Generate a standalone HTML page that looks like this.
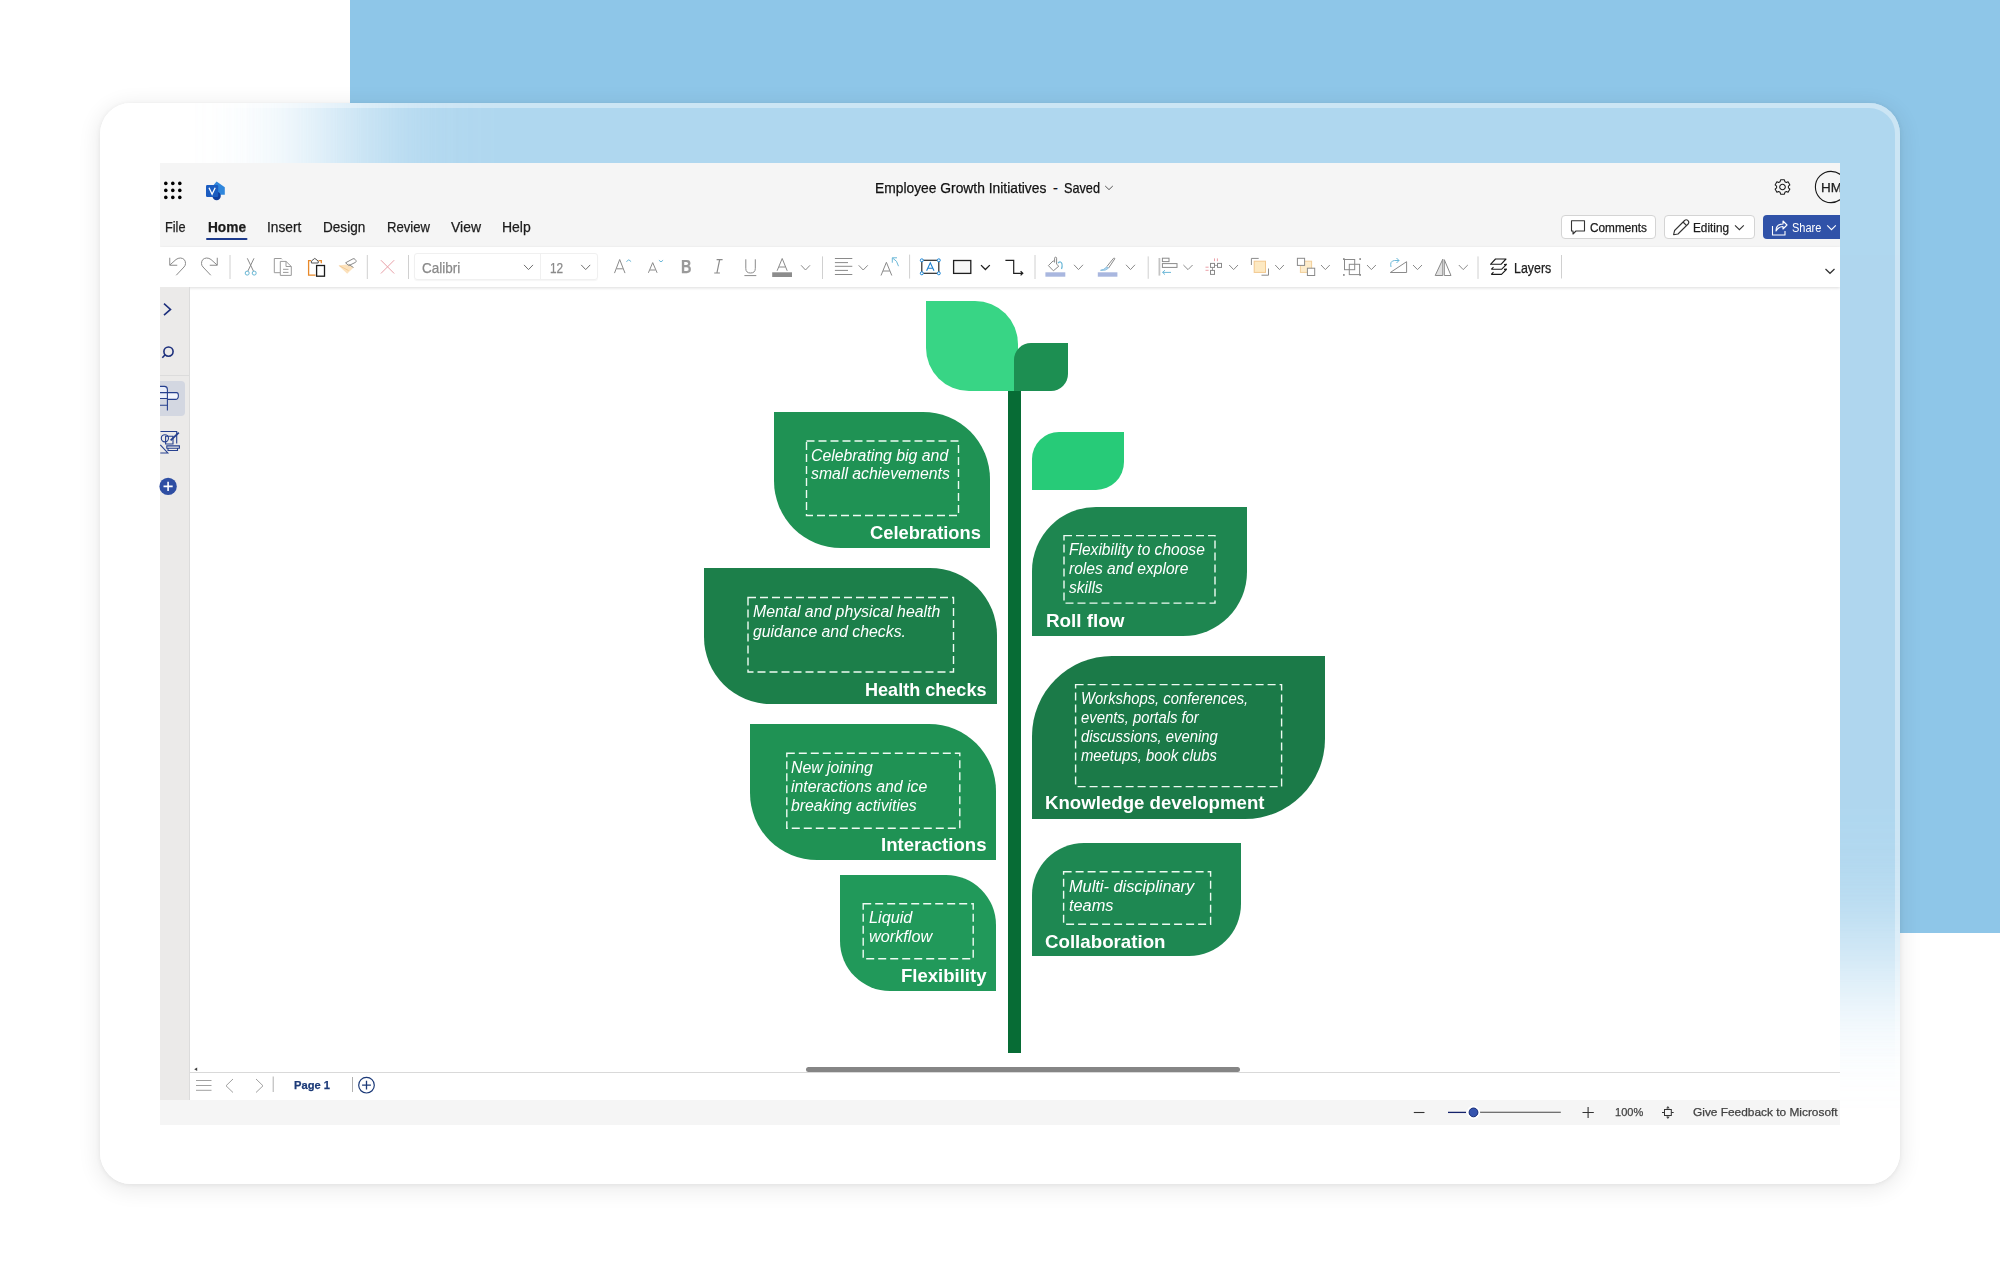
<!DOCTYPE html>
<html><head><meta charset="utf-8">
<style>
*{box-sizing:border-box;margin:0;padding:0}
html,body{width:2000px;height:1283px;overflow:hidden;background:#fff}
body{position:relative;font-family:"Liberation Sans",sans-serif;color:#242424}
.a{position:absolute}
.tx{position:absolute;white-space:pre;line-height:1;transform-origin:0 50%}
.ui{-webkit-text-stroke:.25px currentColor}
#bluebg{left:350px;top:0;width:1650px;height:933px;background:#8ec6e8}
#cardsh{left:100px;top:103px;width:1800px;height:1081px;border-radius:31px;box-shadow:0 1px 5px rgba(0,0,0,.07),0 4px 20px 4px rgba(0,0,0,.07)}
#card{left:100px;top:103px;width:1800px;height:1081px;border-radius:31px;overflow:hidden;background:#fff}
#frost{left:238px;top:-400px;width:1900px;height:1262px;background:#8ec6e8;filter:blur(65px);opacity:.7}
#cardbord{left:0;top:0;width:1800px;height:1081px;border-radius:31px;border:5px solid rgba(255,255,255,.35)}
#app{left:160px;top:163px;width:1680px;height:962px;overflow:hidden;background:#fff}
#titlebar{left:0;top:0;width:1680px;height:84px;background:#f5f5f5}
#toolbar{left:0;top:84px;width:1680px;height:40px;background:#fff;box-shadow:0 1px 3px rgba(0,0,0,.14)}
#sidebar{left:0;top:124px;width:30px;height:813px;background:#ebeae9;border-right:1px solid #dcdcdc}
#bottombar{left:30px;top:909px;width:1650px;height:28px;background:#fff;border-top:1px solid #d9d9d9}
#status{left:0;top:937px;width:1680px;height:25px;background:#f5f5f5}
.leaf{position:absolute}
.btn{position:absolute;background:#fff;border:1px solid #d4d4d4;border-radius:4px}
</style></head><body>
<div id="bluebg" class="a"></div>
<div id="cardsh" class="a"></div>
<div id="card" class="a">
  <div id="frost" class="a"></div>
  <div id="cardbord" class="a"></div>
</div>
<div id="app" class="a">
  <div id="titlebar" class="a"></div>
  <div id="toolbar" class="a"></div>
  <div id="sidebar" class="a"></div>
  <div id="bottombar" class="a"></div>
  <div id="status" class="a"></div>
  <!-- buttons (app coords) -->
  <div class="btn" style="left:1401px;top:52px;width:95px;height:24px"></div>
  <div class="btn" style="left:1504px;top:52px;width:91px;height:24px"></div>
  <div class="a" style="left:1603px;top:52px;width:100px;height:24px;background:#3052a8;border-radius:4px"></div>
  <div class="a" style="left:254px;top:90px;width:184px;height:27px;border:1px solid #f0f0f0;border-radius:3px;box-shadow:0 1px 1px rgba(0,0,0,.04)"></div>
  <div class="a" style="left:380px;top:91px;width:1px;height:25px;background:#f0f0f0"></div>
  <div class="a" style="left:0;top:218px;width:25px;height:35px;background:#d3d7e1;border-radius:0 4px 4px 0"></div>
  <div class="a" style="left:0;top:212px;width:30px;height:1px;background:#dcdcdc"></div>
  <div class="a" style="left:645.5px;top:903.5px;width:434.5px;height:5px;background:#858585;border-radius:3px"></div>
</div>

<!-- diagram (page coords) -->
<div class="a" style="left:1008px;top:391px;width:13px;height:662px;background:#076c35"></div>
<div class="leaf" style="left:926px;top:301px;width:92px;height:90px;background:#38d585;border-radius:0 43px 0 43px"></div>
<div class="leaf" style="left:1014px;top:343px;width:54px;height:48px;background:#1d8f52;border-radius:17px 0 17px 0"></div>
<div class="leaf" style="left:1032px;top:432px;width:92px;height:58px;background:#27cb78;border-radius:27px 0 28px 0"></div>

<div class="leaf" style="left:774px;top:412px;width:216px;height:136px;background:#1f9254;border-radius:0 67px 0 67px"></div>
<div class="leaf" style="left:704px;top:568px;width:293px;height:136px;background:#1c7f4a;border-radius:0 67px 0 67px"></div>
<div class="leaf" style="left:750px;top:724px;width:246px;height:136px;background:#1f9254;border-radius:0 67px 0 67px"></div>
<div class="leaf" style="left:840px;top:875px;width:156px;height:116px;background:#21995a;border-radius:0 50px 0 50px"></div>

<div class="leaf" style="left:1032px;top:507px;width:215px;height:129px;background:#1e8650;border-radius:64px 0 64px 0"></div>
<div class="leaf" style="left:1032px;top:656px;width:293px;height:163px;background:#1b7a48;border-radius:80px 0 80px 0"></div>
<div class="leaf" style="left:1032px;top:843px;width:209px;height:113px;background:#1e8852;border-radius:52px 0 52px 0"></div>

<div class="a" style="left:0;top:0;width:1840px;height:1283px;overflow:hidden">
<svg class="a" style="left:0;top:0" width="1840" height="1283" viewBox="0 0 1840 1283">
<!-- dashed boxes -->
<g fill="none" stroke="#eefbf2" stroke-width="1.4" stroke-dasharray="8 4">
<rect x="806.5" y="441" width="152" height="74.5"/>
<rect x="748" y="597.5" width="205.5" height="74.5"/>
<rect x="786.8" y="753.2" width="173" height="75"/>
<rect x="863.2" y="903.8" width="110" height="55"/>
<rect x="1064" y="535.6" width="151" height="67.5"/>
<rect x="1075.6" y="684.6" width="206" height="102"/>
<rect x="1063.6" y="871.8" width="147" height="52.5"/>
</g>
<!-- launcher dots -->
<g fill="#000">
<circle cx="165.8" cy="183.4" r="1.8"/><circle cx="172.8" cy="183.4" r="1.8"/><circle cx="179.8" cy="183.4" r="1.8"/>
<circle cx="165.8" cy="190.4" r="1.8"/><circle cx="172.8" cy="190.4" r="1.8"/><circle cx="179.8" cy="190.4" r="1.8"/>
<circle cx="165.8" cy="197.4" r="1.8"/><circle cx="172.8" cy="197.4" r="1.8"/><circle cx="179.8" cy="197.4" r="1.8"/>
</g>
<!-- visio logo -->
<path d="M212,187 L216.6,181.6 L224.8,187.2 L224.8,194.8 L212,194.8Z" fill="#2f86dc"/>
<circle cx="216.6" cy="196" r="4.2" fill="#0f3d9c"/>
<rect x="206" y="185" width="12.2" height="12" rx="1.2" fill="#1b5cc0"/>
<path d="M209,187.8 L212.1,194.3 L215.2,187.8" fill="none" stroke="#fff" stroke-width="1.3"/>
<!-- title chevron -->
<path d="M1105.2,186 L1109,189.6 L1112.8,186" fill="none" stroke="#555" stroke-width="1"/>
<!-- Home underline -->
<rect x="206" y="238" width="41.5" height="2" rx="1" fill="#1c3a8c"/>
<!-- gear -->
<g transform="translate(1782.5,187)" fill="none" stroke="#1a1a1a" stroke-width="1.05">
<path d="M-1.9,-7.2 L1.9,-7.2 L2.4,-5.3 L3.9,-4.5 L5.6,-5.3 L7.4,-2.1 L5.9,-0.9 L5.9,0.9 L7.4,2.1 L5.6,5.3 L3.9,4.5 L2.4,5.3 L1.9,7.2 L-1.9,7.2 L-2.4,5.3 L-3.9,4.5 L-5.6,5.3 L-7.4,2.1 L-5.9,0.9 L-5.9,-0.9 L-7.4,-2.1 L-5.6,-5.3 L-3.9,-4.5 L-2.4,-5.3Z" stroke-linejoin="round"/>
<circle r="2.8"/>
</g>
<!-- avatar -->
<circle cx="1831" cy="187" r="15.6" fill="none" stroke="#1a1a1a" stroke-width="1.1"/>
<!-- comments icon -->
<path d="M1571.5,220.7 H1584.5 V231 H1576 L1573,234 V231 H1571.5Z" fill="none" stroke="#333" stroke-width="1.1" stroke-linejoin="round"/>
<!-- pencil -->
<g fill="none" stroke="#333" stroke-width="1.1" stroke-linejoin="round">
<path d="M1673.6,234.7 L1674.6,230.5 L1684.6,220.5 Q1686.3,219 1688,220.7 Q1689.6,222.4 1688.1,224 L1678,234 Z"/>
<path d="M1683,222 L1686.6,225.6"/>
</g>
<path d="M1735,225.3 L1739.4,229.7 L1743.8,225.3" fill="none" stroke="#333" stroke-width="1.1"/>
<!-- share icon -->
<g fill="none" stroke="#fff" stroke-width="1.1" stroke-linejoin="round">
<path d="M1772.5,226 V235 H1785 V231"/>
<path d="M1776,231 Q1776,224 1783,224 V221 L1787,225 L1783,229 V226.5 Q1778.5,226.5 1776,231Z"/>
</g>
<path d="M1827.2,225.3 L1831.5,229.7 L1835.8,225.3" fill="none" stroke="#fff" stroke-width="1.1"/>

<!-- ===== toolbar ===== -->
<g fill="none" stroke-width="1">
<!-- undo/redo -->
<path d="M169.75,257.75 V265.25 H177.25 M169.9,265 L176,259.5 Q178,258 180.5,258 Q185.5,258.5 185.5,263.5 Q185.5,265.5 184,267 L176.25,275.25" stroke="#8a8a8a"/>
<path d="M217.25,257.75 V265.25 H209.75 M217.1,265 L211,259.5 Q209,258 206.5,258 Q201.5,258.5 201.5,263.5 Q201.5,265.5 203,267 L210.75,275.25" stroke="#8a8a8a"/>
<!-- separators -->
<path d="M230,255 V279 M367.3,255 V279 M408.5,255 V279 M822.5,256.4 V279 M909.6,254.6 V278.6 M1035,255 V279 M1148.2,256.4 V278.8 M1478,256.4 V278.9 M1561.5,255 V278.5" stroke="#d0d0d0"/>
<!-- scissors -->
<path d="M247.3,258.3 L253.5,271.2 M254,258.3 L247.8,271.2" stroke="#8a8a8a"/>
<circle cx="247.2" cy="273.1" r="2" stroke="#66b6d4"/>
<circle cx="254.2" cy="273.1" r="2" stroke="#66b6d4"/>
<!-- copy -->
<path d="M280,272.7 H274.3 V258.5 H281.3 L282,259.3" stroke="#9a9a9a"/>
<path d="M280.3,261.4 H286 L291.3,266.5 V275.4 H280.3Z M286,261.4 V266.5 H291.3 M283,269.3 H288.5 M283,272.4 H288.5" stroke="#9a9a9a"/>
<!-- paste -->
<path d="M315.5,275.2 H308.6 V260.6 H311 M318.5,260.6 H321.3 V263.3" stroke="#e8892a" stroke-width="1.3"/>
<path d="M311.4,263 H318.2 V261 L314.8,258.4 L311.4,261Z" stroke="#555"/>
<rect x="316.6" y="265.5" width="7.9" height="10.7" stroke="#1a1a1a" stroke-width="1.3" fill="#fff"/>
<!-- format painter -->
<path d="M338.5,265.4 L347.2,273.8 L353.5,267.5 L348.6,264.2Z" fill="#fce2bd" stroke="none"/>
<path d="M339.5,265.8 L348.5,270.5" stroke="#f3c78e" stroke-width=".9"/>
<path d="M345.6,262.8 L353,258.8 Q354.2,258.3 355,259.3 L356,260.6 Q356.5,261.6 355.6,262.3 L348.8,265.6 Z M348.6,264.3 L353.5,267.5" stroke="#8a8a8a"/>
<!-- delete X -->
<path d="M380.9,260.2 L394.2,273.5 M394.2,260.2 L380.9,273.5" stroke="#e9a0a8"/>
<!-- font dropdown chevrons -->
<path d="M524,264.9 L528.5,269.6 L533,264.9 M581.2,264.9 L585.7,269.6 L590.2,264.9" stroke="#707070"/>
<!-- A grow -->
<path d="M614.5,273.1 L619.7,259.5 L625,273.1 M616.5,268.8 H622.9" stroke="#8a8a8a"/>
<path d="M626.4,261.6 L628.8,259.8 L631.1,261.6" stroke="#6cb8d8"/>
<!-- A shrink -->
<path d="M648.4,272.8 L652.7,262.6 L657.1,272.8 M650,270 H655.5" stroke="#8a8a8a"/>
<path d="M658.9,260.2 L661,261.9 L663.1,260.2" stroke="#6cb8d8"/>
<!-- I -->
<path d="M716.6,259.7 H722.6 M719.7,259.7 L716.9,273 M714.2,273 H719.9" stroke="#8a8a8a" stroke-width="1.2"/>
<!-- U -->
<path d="M745.8,259.3 V268.5 Q745.8,273 750.5,273 Q755.3,273 755.3,268.5 V259.3 M744.4,275.6 H756.3" stroke="#8a8a8a"/>
<!-- A font color -->
<path d="M777.1,270.8 L782.2,258.5 L787.2,270.8 M779,267 H785.4" stroke="#8a8a8a"/>
<rect x="772.2" y="272.3" width="19.8" height="4.7" fill="#8c8c8c" stroke="none"/>
<path d="M801.1,265.3 L805.5,270 L810,265.3" stroke="#8a8a8a"/>
<!-- align -->
<path d="M834.9,258.5 H852.3 M834.9,262.6 H848 M834.9,266.3 H852.3 M834.9,270.4 H848 M834.9,274.5 H852.3" stroke="#8a8a8a"/>
<path d="M858.7,265.3 L863.2,270 L867.8,265.3" stroke="#8a8a8a"/>
<!-- A with arrow -->
<path d="M881,275.5 L886.4,262.3 L891.8,275.5 M883,271 H889.8" stroke="#8a8a8a"/>
<path d="M892.3,262.7 V257.8 H897 M892.5,258 Q897.5,260.5 898.5,266.2" stroke="#6cb8d8"/>
<!-- text box -->
<rect x="921.8" y="260.3" width="17" height="13" stroke="#2a2a2a" stroke-width="1.2"/>
<g fill="#fff" stroke="#1e88d8" stroke-width="1"><circle cx="921.8" cy="260.3" r="1.5"/><circle cx="938.8" cy="260.3" r="1.5"/><circle cx="921.8" cy="273.3" r="1.5"/><circle cx="938.8" cy="273.3" r="1.5"/></g>
<path d="M926.6,270.8 L930.3,262.7 L934,270.8 M927.8,268.2 H932.8" stroke="#1e80d0" stroke-width="1.1"/>
<!-- rectangle -->
<rect x="953.6" y="260.5" width="17.2" height="12.9" fill="#f6f6f6" stroke="#1f1f1f" stroke-width="1.3"/>
<path d="M981,265.1 L985.4,269.5 L989.8,265.1" stroke="#1f1f1f" stroke-width="1.3"/>
<!-- connector -->
<path d="M1005.4,260.3 H1013.7 V273.3 H1022.3 M1020.6,271.2 L1022.8,273.3 L1020.6,275.4" stroke="#1f1f1f" stroke-width="1.2"/>
<!-- fill -->
<path d="M1048.4,265.6 L1053.2,260.8 L1054.6,262.2 V258.2 Q1054.6,257.2 1055.6,257.2 Q1056.6,257.2 1056.6,258.2 V264.2 L1058.8,266.2 L1053.4,270.8 Z" stroke="#8a8a8a"/>
<path d="M1058,263 Q1061,260.5 1062,264 Q1062.5,266.5 1061.5,269" stroke="#6cb8d8" stroke-width="1.2"/>
<rect x="1045.4" y="272.3" width="19.9" height="4.4" fill="#a9b7df" stroke="none"/>
<path d="M1074,264.8 L1078.5,269.6 L1083,264.8" stroke="#8a8a8a"/>
<!-- line brush -->
<path d="M1106.8,266.6 L1113.5,258.3 Q1114.6,257.5 1114.8,258.8 L1108.6,268" stroke="#8a8a8a"/>
<path d="M1100.5,270.3 Q1104,269.8 1106,267.5 Q1107.5,266.3 1108.3,268.3 Q1106,271 1100.5,270.3Z" fill="#b8d8f0" stroke="#7ab8dc" stroke-width=".8"/>
<rect x="1097.8" y="272.3" width="19.6" height="4.4" fill="#a9b7df" stroke="none"/>
<path d="M1126,264.8 L1130.5,269.6 L1135,264.8" stroke="#8a8a8a"/>
<!-- align objects -->
<path d="M1159.4,258 V275.6" stroke="#c4c4c4" stroke-width="1.8"/>
<rect x="1162.4" y="258.2" width="6.6" height="3.4" stroke="#8a8a8a"/>
<rect x="1162.4" y="263.6" width="14.6" height="3.8" stroke="#8a8a8a"/>
<path d="M1171,272.4 H1162.6 M1165,270.2 L1162.6,272.4 L1165,274.6" stroke="#6cb8d8"/>
<path d="M1183.4,265 L1188,269.6 L1192.6,265" stroke="#8a8a8a"/>
<!-- distribute -->
<rect x="1210.5" y="263.4" width="4" height="4" stroke="#8a8a8a"/>
<rect x="1217.5" y="263.4" width="4" height="4" stroke="#8a8a8a"/>
<rect x="1210.5" y="270.4" width="4" height="4" stroke="#8a8a8a"/>
<path d="M1214.5,265.4 H1217.5 M1212.5,267.4 V270.4" stroke="#8a8a8a" stroke-width=".8"/>
<path d="M1214.5,258.4 V261.2 M1217.4,258.4 V261.2 M1205.5,267.2 H1208.6 M1205.5,270.3 H1208.6" stroke="#eba0a8"/>
<path d="M1229.2,265 L1233.6,269.6 L1238,265" stroke="#8a8a8a"/>
<!-- bring front -->
<path d="M1251.4,265 V258.4 H1258.7 M1261.5,275.2 H1268.5 V268.5" stroke="#8a8a8a"/>
<rect x="1254.2" y="261.2" width="11.3" height="11.2" fill="#fde9c2" stroke="#f2c88e"/>
<path d="M1275.2,265 L1279.5,269.6 L1283.9,265" stroke="#8a8a8a"/>
<!-- send back -->
<rect x="1300.4" y="261.2" width="11.2" height="11.2" fill="#fdeccb" stroke="#f2cf9a"/>
<rect x="1297.4" y="258.3" width="7.2" height="7.1" fill="#fff" stroke="#8a8a8a"/>
<rect x="1307.4" y="268.2" width="7.3" height="7.3" fill="#fff" stroke="#8a8a8a"/>
<path d="M1321,265 L1325.4,269.6 L1329.8,265" stroke="#8a8a8a"/>
<!-- group -->
<g fill="#8a8a8a" stroke="none"><rect x="1343" y="258.2" width="1.7" height="1.7"/><rect x="1359.3" y="258.2" width="1.7" height="1.7"/><rect x="1343" y="274.1" width="1.7" height="1.7"/><rect x="1359.3" y="274.1" width="1.7" height="1.7"/></g>
<rect x="1344.5" y="259.5" width="10.2" height="10.2" stroke="#8a8a8a"/>
<rect x="1349.3" y="264.3" width="10.3" height="10.3" stroke="#8a8a8a"/>
<path d="M1367,265 L1371.4,269.6 L1375.9,265" stroke="#8a8a8a"/>
<!-- rotate -->
<path d="M1390.3,272.5 L1406.6,261.7 V272.5Z" stroke="#8a8a8a"/>
<path d="M1391,267 Q1389.5,261 1394.5,260.5 H1399 M1396.5,258 L1399,260.5 L1396.5,263" stroke="#6cb8d8"/>
<path d="M1413,265 L1417.5,269.6 L1422,265" stroke="#8a8a8a"/>
<!-- flip -->
<path d="M1435.2,275.5 L1442.8,259.2 V275.5Z" fill="#e2e2e2" stroke="#8a8a8a"/>
<path d="M1444.3,259.7 L1451,275.5 H1444.3Z" stroke="#8a8a8a"/>
<path d="M1458.8,265 L1463.2,269.6 L1467.8,265" stroke="#8a8a8a"/>
<!-- layers icon -->
<g stroke="#1a1a1a" stroke-width="1.1" stroke-linejoin="round">
<path d="M1490.5,264.3 L1495.5,259 H1506 L1501,264.3Z"/>
<path d="M1506.8,264.2 L1501.5,269.3 H1491.2 M1493.5,267.2 L1491.2,269.3 M1506.8,264.2 L1504,264.6"/>
<path d="M1506.8,269 L1501.5,274.4 H1491.2 M1493.5,272.2 L1491.2,274.4 M1506.8,269 L1504,269.4"/>
</g>
<!-- ribbon collapse chevron -->
<path d="M1825.5,269 L1830,273.3 L1834.5,269" stroke="#333" stroke-width="1.2"/>
</g>

<!-- ===== sidebar ===== -->
<g fill="none" stroke="#1c2f7c" stroke-width="1.6">
<path d="M164,303.7 L170.5,309.4 L164,315.2"/>
<circle cx="168.5" cy="351.6" r="4.6"/>
<path d="M165.2,354.8 L162.3,357.8"/>
</g>
<path d="M160,386.5 H164.5 Q167.4,386.5 167.4,389.5 V398.6 H160Z" fill="#e9eefa" stroke="none"/>
<path d="M167.4,392.6 H176.5 Q178.4,392.6 178.4,395.5 Q178.4,399.4 175.5,399.4 H167.4Z" fill="#f2f5fd" stroke="none"/>
<g fill="none" stroke="#26408f" stroke-width="1.1">
<path d="M160,386.4 H164.5 Q167.4,386.4 167.4,389.5 V410.6"/>
<path d="M160,392.6 H176.5 Q178.4,392.6 178.4,395.5 Q178.4,399.4 175.5,399.4 H167.4"/>
<path d="M160,398.5 H167.4 M160,405.3 H167.4"/>
<path d="M160.5,431.5 H176.7 V443.6"/>
<circle cx="164.9" cy="438.3" r="3.6"/>
<path d="M165.6,436.2 H173 V444 H165.6Z"/>
<path d="M160.3,444.8 L167.8,453 H160.3"/>
<path d="M166.8,445.9 H179.4 V448.3 H166.8Z M168,448.3 V450.5 H177.5 V448.3"/>
</g>
<path d="M170.6,440.4 L178.8,432.6" stroke="#26408f" stroke-width="1.8"/>
<circle cx="168.1" cy="486.4" r="8.7" fill="#2e4ea3"/>
<path d="M168.1,481.8 V491 M163.5,486.4 H172.7" stroke="#fff" stroke-width="1.6"/>

<!-- ===== bottom bar ===== -->
<path d="M197.2,1067.6 V1071 L194.2,1069.3Z" fill="#404040"/>
<g fill="none" stroke="#a0a0a0" stroke-width="1">
<path d="M196,1080.5 H211.5 M196,1085.5 H211.5 M196,1090.3 H211.5"/>
<path d="M233,1079 L226,1085.8 L233,1092.5 M256,1079 L263,1085.8 L256,1092.5"/>
<path d="M273.2,1076.5 V1092 M352.5,1077 V1092" stroke="#b0b0b0"/>
</g>
<circle cx="366.5" cy="1085.2" r="7.8" fill="none" stroke="#1c3a78" stroke-width="1.2"/>
<path d="M366.5,1080.8 V1089.6 M362.1,1085.2 H370.9" stroke="#1c3a78" stroke-width="1.3"/>
<!-- status bar -->
<g fill="none" stroke="#333" stroke-width="1.1">
<path d="M1413.8,1112.5 H1424.5"/>
<path d="M1582.5,1112.5 H1593.8 M1588.1,1107 V1118"/>
</g>
<path d="M1448,1112.4 H1466" stroke="#14226a" stroke-width="1.3"/>
<path d="M1480,1112.3 H1560.8" stroke="#444" stroke-width="1.1"/>
<circle cx="1473.5" cy="1112.4" r="6.6" fill="#fff"/>
<circle cx="1473.5" cy="1112.4" r="4.4" fill="#3654ae" stroke="#142a78" stroke-width="1"/>
<g fill="none" stroke="#333" stroke-width="1">
<rect x="1664.5" y="1109.5" width="6.8" height="6"/>
<path d="M1667.9,1106.8 V1109.5 M1667.9,1115.5 V1118.2 M1662,1112.5 H1664.5 M1671.3,1112.5 H1673.7 M1666.5,1108 L1667.9,1106.8 L1669.3,1108 M1666.5,1117 L1667.9,1118.2 L1669.3,1117"/>
</g>
</svg>

<div class="tx ui" style="left:874.50px;top:180.73px;font-size:14.5px;font-weight:normal;font-style:normal;color:#111;transform:scaleX(0.9532)">Employee Growth Initiatives</div>
<div class="tx ui" style="left:1053.00px;top:180.73px;font-size:14.5px;font-weight:normal;font-style:normal;color:#111;transform:scaleX(1.0000)">-</div>
<div class="tx ui" style="left:1064.20px;top:180.73px;font-size:14.5px;font-weight:normal;font-style:normal;color:#111;transform:scaleX(0.8754)">Saved</div>
<div class="tx ui" style="left:164.50px;top:220.03px;font-size:14.5px;font-weight:normal;font-style:normal;color:#1c1c1c;transform:scaleX(0.8770)">File</div>
<div class="tx ui" style="left:207.50px;top:220.03px;font-size:14.5px;font-weight:bold;font-style:normal;color:#1c1c1c;transform:scaleX(0.9430)">Home</div>
<div class="tx ui" style="left:267.00px;top:220.03px;font-size:14.5px;font-weight:normal;font-style:normal;color:#1c1c1c;transform:scaleX(0.9444)">Insert</div>
<div class="tx ui" style="left:323.25px;top:220.03px;font-size:14.5px;font-weight:normal;font-style:normal;color:#1c1c1c;transform:scaleX(0.9360)">Design</div>
<div class="tx ui" style="left:387.00px;top:220.03px;font-size:14.5px;font-weight:normal;font-style:normal;color:#1c1c1c;transform:scaleX(0.9044)">Review</div>
<div class="tx ui" style="left:451.25px;top:220.03px;font-size:14.5px;font-weight:normal;font-style:normal;color:#1c1c1c;transform:scaleX(0.9624)">View</div>
<div class="tx ui" style="left:502.00px;top:220.03px;font-size:14.5px;font-weight:normal;font-style:normal;color:#1c1c1c;transform:scaleX(0.9639)">Help</div>
<div class="tx ui" style="left:1590.00px;top:221.64px;font-size:12px;font-weight:normal;font-style:normal;color:#1c1c1c;transform:scaleX(0.9825)">Comments</div>
<div class="tx ui" style="left:1693.40px;top:221.64px;font-size:12px;font-weight:normal;font-style:normal;color:#1c1c1c;transform:scaleX(0.9808)">Editing</div>
<div class="tx" style="left:1792.00px;top:221.64px;font-size:12px;font-weight:normal;font-style:normal;color:#ffffff;transform:scaleX(0.9179)">Share</div>
<div class="tx ui" style="left:1821.00px;top:182.19px;font-size:12.3px;font-weight:normal;font-style:normal;color:#1c1c1c;transform:scaleX(1.0980)">HM</div>
<div class="tx ui" style="left:681.30px;top:257.86px;font-size:18px;font-weight:bold;font-style:normal;color:#9a9a9a;transform:scaleX(0.8077)">B</div>
<div class="tx ui" style="left:1513.75px;top:260.90px;font-size:14px;font-weight:normal;font-style:normal;color:#1c1c1c;transform:scaleX(0.8862)">Layers</div>
<div class="tx ui" style="left:422.00px;top:260.95px;font-size:14px;font-weight:normal;font-style:normal;color:#8a8a8a;transform:scaleX(0.9625)">Calibri</div>
<div class="tx ui" style="left:550.00px;top:260.95px;font-size:14px;font-weight:normal;font-style:normal;color:#8a8a8a;transform:scaleX(0.8473)">12</div>
<div class="tx ui" style="left:294.00px;top:1079.57px;font-size:11.5px;font-weight:bold;font-style:normal;color:#1c3a78;transform:scaleX(0.9709)">Page 1</div>
<div class="tx ui" style="left:1614.70px;top:1107.27px;font-size:11.5px;font-weight:normal;font-style:normal;color:#424242;transform:scaleX(0.9585)">100%</div>
<div class="tx ui" style="left:1693.10px;top:1107.27px;font-size:11.5px;font-weight:normal;font-style:normal;color:#424242;transform:scaleX(1.0330)">Give Feedback to Microsoft</div>
<div class="tx" style="left:811.30px;top:447.66px;font-size:16px;font-weight:normal;font-style:italic;color:#ffffff;transform:scaleX(0.9887)">Celebrating big and</div>
<div class="tx" style="left:811.30px;top:466.41px;font-size:16px;font-weight:normal;font-style:italic;color:#ffffff;transform:scaleX(0.9887)">small achievements</div>
<div class="tx" style="left:752.90px;top:604.26px;font-size:16px;font-weight:normal;font-style:italic;color:#ffffff;transform:scaleX(0.9881)">Mental and physical health</div>
<div class="tx" style="left:752.90px;top:623.66px;font-size:16px;font-weight:normal;font-style:italic;color:#ffffff;transform:scaleX(0.9881)">guidance and checks.</div>
<div class="tx" style="left:791.30px;top:779.26px;font-size:16px;font-weight:normal;font-style:italic;color:#ffffff;transform:scaleX(0.9880)">interactions and ice</div>
<div class="tx" style="left:791.30px;top:760.26px;font-size:16px;font-weight:normal;font-style:italic;color:#ffffff;transform:scaleX(0.9880)">New joining</div>
<div class="tx" style="left:791.30px;top:798.06px;font-size:16px;font-weight:normal;font-style:italic;color:#ffffff;transform:scaleX(0.9880)">breaking activities</div>
<div class="tx" style="left:868.50px;top:929.46px;font-size:16px;font-weight:normal;font-style:italic;color:#ffffff;transform:scaleX(1.0155)">workflow</div>
<div class="tx" style="left:868.50px;top:910.36px;font-size:16px;font-weight:normal;font-style:italic;color:#ffffff;transform:scaleX(1.0155)">Liquid</div>
<div class="tx" style="left:1069.00px;top:542.26px;font-size:16px;font-weight:normal;font-style:italic;color:#ffffff;transform:scaleX(0.9726)">Flexibility to choose</div>
<div class="tx" style="left:1069.00px;top:560.66px;font-size:16px;font-weight:normal;font-style:italic;color:#ffffff;transform:scaleX(0.9726)">roles and explore</div>
<div class="tx" style="left:1069.00px;top:579.96px;font-size:16px;font-weight:normal;font-style:italic;color:#ffffff;transform:scaleX(0.9726)">skills</div>
<div class="tx" style="left:1080.90px;top:691.06px;font-size:16px;font-weight:normal;font-style:italic;color:#ffffff;transform:scaleX(0.9262)">Workshops, conferences,</div>
<div class="tx" style="left:1080.90px;top:709.76px;font-size:16px;font-weight:normal;font-style:italic;color:#ffffff;transform:scaleX(0.9262)">events, portals for</div>
<div class="tx" style="left:1080.90px;top:729.46px;font-size:16px;font-weight:normal;font-style:italic;color:#ffffff;transform:scaleX(0.9262)">discussions, evening</div>
<div class="tx" style="left:1080.90px;top:747.86px;font-size:16px;font-weight:normal;font-style:italic;color:#ffffff;transform:scaleX(0.9262)">meetups, book clubs</div>
<div class="tx" style="left:1068.50px;top:878.86px;font-size:16px;font-weight:normal;font-style:italic;color:#ffffff;transform:scaleX(1.0203)">Multi- disciplinary</div>
<div class="tx" style="left:1068.50px;top:897.86px;font-size:16px;font-weight:normal;font-style:italic;color:#ffffff;transform:scaleX(1.0203)">teams</div>
<div class="tx" style="left:869.60px;top:523.32px;font-size:19px;font-weight:bold;font-style:normal;color:#ffffff;transform:scaleX(0.9636)">Celebrations</div>
<div class="tx" style="left:865.30px;top:679.62px;font-size:19px;font-weight:bold;font-style:normal;color:#ffffff;transform:scaleX(0.9507)">Health checks</div>
<div class="tx" style="left:880.80px;top:835.42px;font-size:19px;font-weight:bold;font-style:normal;color:#ffffff;transform:scaleX(0.9795)">Interactions</div>
<div class="tx" style="left:900.60px;top:966.32px;font-size:19px;font-weight:bold;font-style:normal;color:#ffffff;transform:scaleX(0.9756)">Flexibility</div>
<div class="tx" style="left:1045.60px;top:610.52px;font-size:19px;font-weight:bold;font-style:normal;color:#ffffff;transform:scaleX(0.9917)">Roll flow</div>
<div class="tx" style="left:1045.40px;top:792.92px;font-size:19px;font-weight:bold;font-style:normal;color:#ffffff;transform:scaleX(0.9807)">Knowledge development</div>
<div class="tx" style="left:1045.40px;top:931.52px;font-size:19px;font-weight:bold;font-style:normal;color:#ffffff;transform:scaleX(0.9841)">Collaboration</div>
</div>
</body></html>
